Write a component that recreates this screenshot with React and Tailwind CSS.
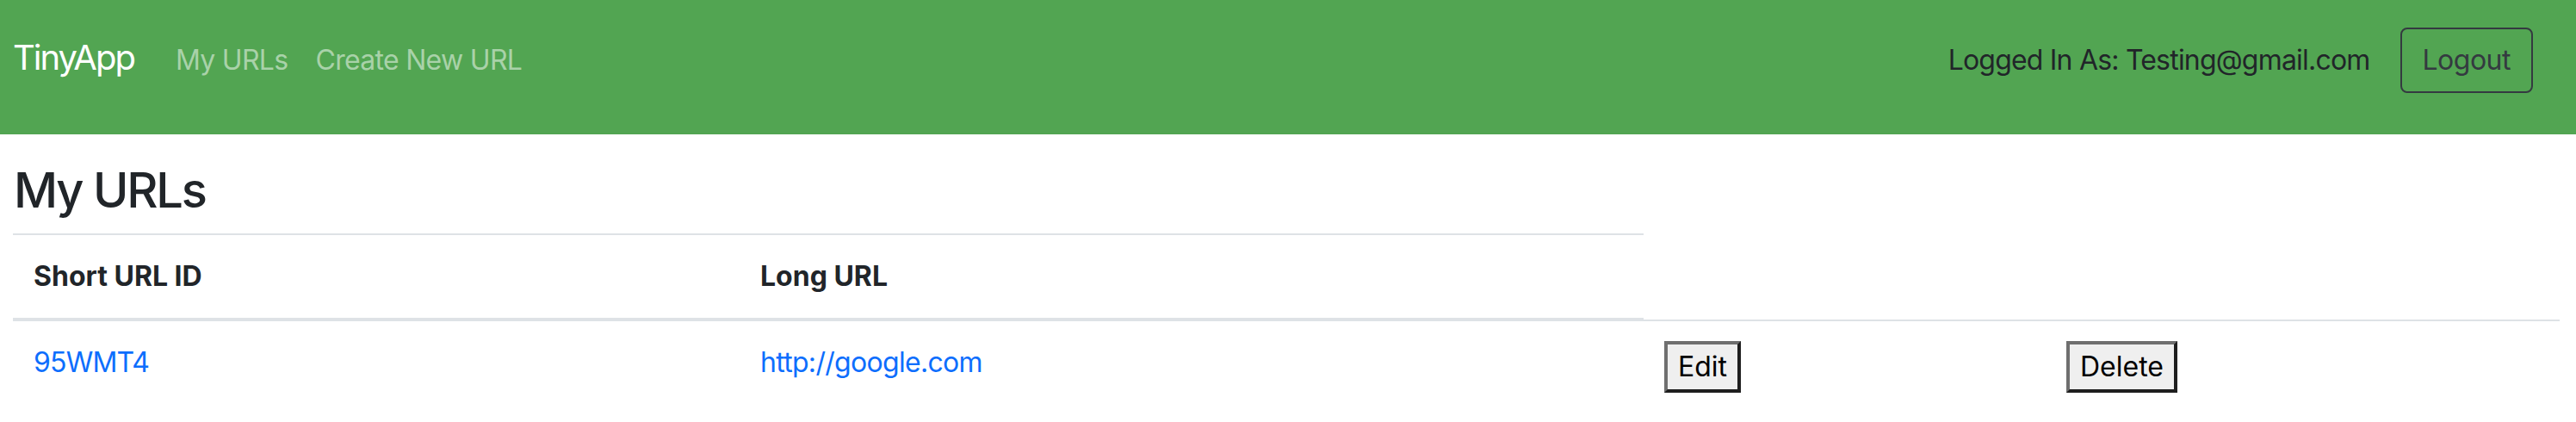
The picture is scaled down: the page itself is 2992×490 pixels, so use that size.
export default function App() {
  return (
    <div className="w-[2992px] h-[490px] bg-white text-[#212529] overflow-hidden font-['Inter','Noto_Sans',sans-serif]">
      <nav className="h-[156px] bg-[#52a552] flex items-baseline pt-[32px] pl-[15px] pr-[50px]">
        <a className="text-[40px] leading-[60px] tracking-[-2px] text-white mr-[32px]">TinyApp</a>
        <a className="text-[32px] leading-[48px] tracking-[-0.7px] text-[#a9d2a9] px-[16px]">My URLs</a>
        <a className="text-[32px] leading-[48px] tracking-[-0.7px] text-[#a9d2a9] px-[16px]">Create New URL</a>
        <div className="flex-1" />
        <span className="text-[32px] leading-[48px] tracking-[-0.8px] text-[#212529] mr-[35px]">Logged In As: Testing@gmail.com</span>
        <button className="text-[32px] leading-[48px] tracking-[-0.5px] text-[#343a40] border-2 border-[#343a40] rounded-[8px] px-[24px] py-[12px]">
          Logout
        </button>
      </nav>
      <main className="pl-[15px] pr-[19px]">
        <h3 className="text-[56px] leading-[1.2] tracking-[-2.2px] font-medium mt-[32px] mb-[16px] pl-px">My URLs</h3>
        <div className="w-[1894px] grid grid-cols-[844px_1050px] border-t-2 border-b-2 border-[#dee2e6]">
          <div className="px-[24px] py-[24px] text-[32px] leading-[48px] font-bold">Short URL ID</div>
          <div className="px-[24px] py-[24px] text-[32px] leading-[48px] font-bold">Long URL</div>
        </div>
        <div className="grid grid-cols-[844px_1050px_467px_597px] border-t-2 border-[#dee2e6]">
          <div className="px-[24px] pt-[24px] text-[32px] leading-[48px] tracking-[-0.8px] text-[#0d6efd]">
            <a>95WMT4</a>
          </div>
          <div className="px-[24px] pt-[24px] text-[32px] leading-[48px] tracking-[-0.7px] text-[#0d6efd]">
            <a>http://google.com</a>
          </div>
          <div className="px-[24px] pt-[23px]">
            <button className="text-[32px] leading-[48px] text-black bg-[#efefef] border-[4px] border-t-[#6f6f6f] border-l-[#6f6f6f] border-b-[#1e1e1e] border-r-[#1e1e1e] px-[12px] py-[2px]">
              Edit
            </button>
          </div>
          <div className="px-[24px] pt-[23px]">
            <button className="text-[32px] leading-[48px] text-black bg-[#efefef] border-[4px] border-t-[#6f6f6f] border-l-[#6f6f6f] border-b-[#1e1e1e] border-r-[#1e1e1e] px-[12px] py-[2px]">
              Delete
            </button>
          </div>
        </div>
      </main>
    </div>
  );
}
